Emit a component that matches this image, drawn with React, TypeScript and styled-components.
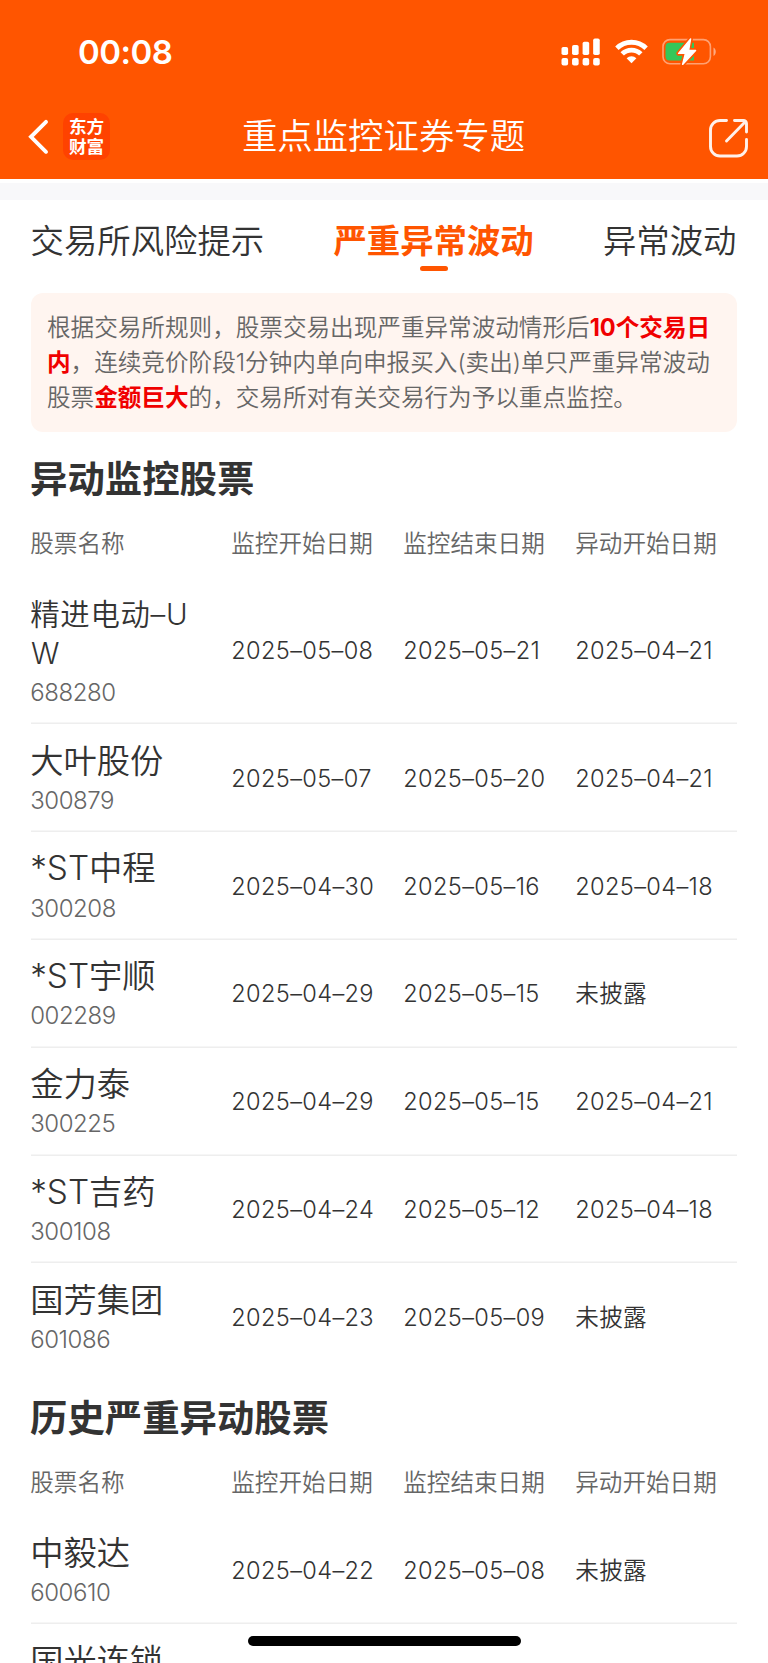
import React from "react";
import styled, { createGlobalStyle } from "styled-components";

const Global = createGlobalStyle`
  * { box-sizing: border-box; }
  html, body { margin: 0; padding: 0; background: #fff; }
  body { overflow: hidden; font-family: Inter, "Noto Sans CJK SC", sans-serif; color: #333; }
`;

const Screen = styled.main`
  position: relative;
  width: 768px;
  height: 1663px;
  overflow: hidden;
  background: #fff;
`;

const Header = styled.header`
  height: 179.4px;
  background: #ff5500;
  color: #fff;
`;

const StatusBar = styled.div`
  height: 94px;
  padding: 9px 51px 0 78px;
  display: flex;
  align-items: center;
  justify-content: space-between;
`;

const Clock = styled.div`
  font-size: 33px;
  line-height: 40px;
  font-weight: 600;
  letter-spacing: -0.5px;
`;

const StatusIcons = styled.div`
  display: flex;
  align-items: center;
  gap: 14.5px;

  svg { display: block; }
`;

const NavBar = styled.div`
  height: 85px;
  padding: 0 19px 0 18px;
  display: grid;
  grid-template-columns: 1fr auto 1fr;
  align-items: center;
`;

const NavLeft = styled.div`
  display: flex;
  align-items: center;
  gap: 12px;
  padding-left: 9px;
`;

const AppBadge = styled.div`
  width: 47px;
  height: 47px;
  padding-top: 4px;
  border-radius: 10px;
  background: #ff4200;
  text-align: center;
  font-size: 17.6px;
  line-height: 19.5px;
  font-weight: 700;
`;

const NavTitle = styled.h1`
  margin: 0;
  font-size: 35.4px;
  line-height: 48px;
  font-weight: 350;
`;

const NavRight = styled.div`
  display: flex;
  justify-content: flex-end;
  padding-top: 3px;
`;

const Divider = styled.div`
  height: 21px;
  border-top: 4.6px solid #fff;
  background: #f8f8fa;
  background-clip: padding-box;
`;

const Tabs = styled.nav`
  height: 92.6px;
  padding: 15.6px 31.5px 0 30.5px;
  display: flex;
  justify-content: space-between;
  align-items: flex-start;
`;

const Tab = styled.div<{ $active?: boolean }>`
  display: flex;
  flex-direction: column;
  align-items: center;
  font-size: 33.4px;
  line-height: 50px;
  font-weight: ${(p) => (p.$active ? 700 : 350)};
  color: ${(p) => (p.$active ? "#ff5500" : "#333")};
  white-space: nowrap;

  &::after {
    content: "";
    width: 28px;
    height: 5px;
    border-radius: 2.5px;
    background: ${(p) => (p.$active ? "#ff5500" : "transparent")};
  }
`;

const Notice = styled.p`
  margin: 0 31px;
  height: 139px;
  padding: 16.6px 0 0 16px;
  border-radius: 12px;
  background: #fff5f0;
  color: #666;
  font-size: 23.6px;
  line-height: 35.4px;
  font-weight: 350;
  white-space: nowrap;
`;

const Warn = styled.strong`
  color: #f00000;
  font-weight: 700;
`;

const Section = styled.section`
  padding: 22.6px 31px 0;
`;

const Heading = styled.h2`
  margin: 0 0 0 -1px;
  font-size: 37.4px;
  line-height: 50px;
  font-weight: 700;
`;

const Row = styled.div<{ $line?: boolean }>`
  display: grid;
  grid-template-columns: 201px 172px 172px 1fr;
  align-items: center;
  text-indent: -0.8px;
  box-shadow: ${(p) => (p.$line ? "inset 0 -1.6px 0 #eeeeee" : "none")};
`;

const HeadRow = styled(Row)`
  height: 72.8px;
  padding-top: 6.2px;
  color: #666;
  font-size: 23.6px;
  line-height: 36px;
  font-weight: 350;
`;

const StockCell = styled.div`
  padding: 17.3px 0 12.3px;
`;

const StockName = styled.div<{ $small?: boolean }>`
  width: 166px;
  font-size: ${(p) => (p.$small ? 29.4 : 33.3)}px;
  line-height: 39.2px;
  font-weight: 350;
  letter-spacing: ${(p) => (p.$small ? 0.7 : 0)}px;
  white-space: pre-line;
`;

const StockCode = styled.div`
  color: #666;
  font-size: 24px;
  line-height: 39px;
  font-weight: 350;
  letter-spacing: -0.45px;
`;

const DateCell = styled.div`
  padding-top: 1px;
  font-size: 23.6px;
  line-height: 36px;
  font-weight: 350;
  letter-spacing: 0.35px;
`;

const HomeIndicator = styled.div`
  position: absolute;
  left: 247.5px;
  bottom: 17px;
  width: 273.5px;
  height: 10px;
  border-radius: 5px;
  background: #000;
`;

type Stock = { name: string; code: string; dates: string[]; small?: boolean };

const monitored: Stock[] = [
  { name: "精进电动–U\nW", code: "688280", dates: ["2025–05–08", "2025–05–21", "2025–04–21"], small: true },
  { name: "大叶股份", code: "300879", dates: ["2025–05–07", "2025–05–20", "2025–04–21"] },
  { name: "*ST中程", code: "300208", dates: ["2025–04–30", "2025–05–16", "2025–04–18"] },
  { name: "*ST宇顺", code: "002289", dates: ["2025–04–29", "2025–05–15", "未披露"] },
  { name: "金力泰", code: "300225", dates: ["2025–04–29", "2025–05–15", "2025–04–21"] },
  { name: "*ST吉药", code: "300108", dates: ["2025–04–24", "2025–05–12", "2025–04–18"] },
  { name: "国芳集团", code: "601086", dates: ["2025–04–23", "2025–05–09", "未披露"] },
];

const history: Stock[] = [
  { name: "中毅达", code: "600610", dates: ["2025–04–22", "2025–05–08", "未披露"] },
  { name: "国光连锁", code: "", dates: [] },
];

const columns = ["股票名称", "监控开始日期", "监控结束日期", "异动开始日期"];

function StockTable({ title, stocks }: { title: string; stocks: Stock[] }) {
  return (
    <Section>
      <Heading>{title}</Heading>
      <HeadRow>
        {columns.map((c) => (
          <span key={c}>{c}</span>
        ))}
      </HeadRow>
      {stocks.map((s, i) => (
        <Row key={s.name} $line={i < stocks.length - 1}>
          <StockCell>
            <StockName $small={s.small}>{s.name}</StockName>
            <StockCode>{s.code}</StockCode>
          </StockCell>
          {s.dates.map((d, j) => (
            <DateCell key={j}>{d}</DateCell>
          ))}
        </Row>
      ))}
    </Section>
  );
}

const signalTops = [9, 7, 3.7, 0.4];

function SignalIcon() {
  return (
    <svg width="39" height="28" viewBox="0 0 39 28" fill="#fff">
      {signalTops.map((y, i) => (
        <g key={i}>
          <rect x={0.5 + i * 10.55} y={y} width="6.6" height={17 - y} rx="1.8" />
          <rect x={0.5 + i * 10.55} y="20" width="6.6" height="7.4" rx="2" />
        </g>
      ))}
    </svg>
  );
}

function WifiIcon() {
  return (
    <svg width="33" height="25" viewBox="0 0 33 25" fill="none" stroke="#fff" strokeWidth="4.8">
      <path d="M1.9 9.3a20.6 20.6 0 0 1 29.2 0" />
      <path d="M7.2 14.9a13.1 13.1 0 0 1 18.6 0" />
      <path d="M16.5 24.3l-4.9-5a7 7 0 0 1 9.8 0z" fill="#fff" stroke="none" />
    </svg>
  );
}

function BatteryIcon() {
  return (
    <svg width="55" height="28" viewBox="0 0 55 28">
      <rect x="1" y="1.6" width="47.4" height="24.2" rx="7" fill="none" stroke="#fff" strokeOpacity="0.45" strokeWidth="1.6" />
      <path d="M51.5 9.5v8.4c3-1.4 3-7 0-8.4z" fill="#fff" fillOpacity="0.5" />
      <path d="M7.5 4.8H32v17.8H7.5a4 4 0 0 1-4-4V8.8a4 4 0 0 1 4-4z" fill="#34c759" />
      <path
        d="M28.6 1L16.6 15.4h6.8L20.6 26.4 33.6 12.4h-7z"
        fill="none"
        stroke="#ff5500"
        strokeWidth="4.6"
        strokeLinejoin="round"
      />
      <path
        d="M28.6 1L16.6 15.4h6.8L20.6 26.4 33.6 12.4h-7z"
        fill="#fff"
        stroke="#fff"
        strokeWidth="1.4"
        strokeLinejoin="round"
      />
    </svg>
  );
}

function BackIcon() {
  return (
    <svg width="24" height="36" viewBox="0 0 24 36" fill="none" stroke="#fff" strokeWidth="3.9" strokeLinecap="round" strokeLinejoin="miter">
      <path d="M19 2.8L4 17.8l15 15" />
    </svg>
  );
}

function ShareIcon() {
  return (
    <svg width="41" height="41" viewBox="0 0 41 41" fill="none" stroke="#fff" strokeOpacity="0.92" strokeWidth="2.9" strokeLinecap="round" strokeLinejoin="round">
      <path d="M18.5 2.5H12A9.5 9.5 0 0 0 2.5 12v16.5A9.5 9.5 0 0 0 12 38h17a9.5 9.5 0 0 0 9.5-9.5V21.5" />
      <path d="M26.5 2.5H35.5a3 3 0 0 1 3 3v8.5M37.5 3.6L18.5 23" />
    </svg>
  );
}

export default function App() {
  return (
    <Screen>
      <Global />
      <Header>
        <StatusBar>
          <Clock>00:08</Clock>
          <StatusIcons>
            <SignalIcon />
            <WifiIcon />
            <BatteryIcon />
          </StatusIcons>
        </StatusBar>
        <NavBar>
          <NavLeft>
            <BackIcon />
            <AppBadge>
              东方
              <br />
              财富
            </AppBadge>
          </NavLeft>
          <NavTitle>重点监控证券专题</NavTitle>
          <NavRight>
            <ShareIcon />
          </NavRight>
        </NavBar>
      </Header>
      <Divider />
      <Tabs>
        <Tab>交易所风险提示</Tab>
        <Tab $active>严重异常波动</Tab>
        <Tab>异常波动</Tab>
      </Tabs>
      <Notice>
        根据交易所规则，股票交易出现严重异常波动情形后<Warn>10个交易日</Warn>
        <br />
        <Warn>内</Warn>，连续竞价阶段1分钟内单向申报买入(卖出)单只严重异常波动
        <br />
        股票<Warn>金额巨大</Warn>的，交易所对有关交易行为予以重点监控。
      </Notice>
      <StockTable title="异动监控股票" stocks={monitored} />
      <StockTable title="历史严重异动股票" stocks={history} />
      <HomeIndicator />
    </Screen>
  );
}
